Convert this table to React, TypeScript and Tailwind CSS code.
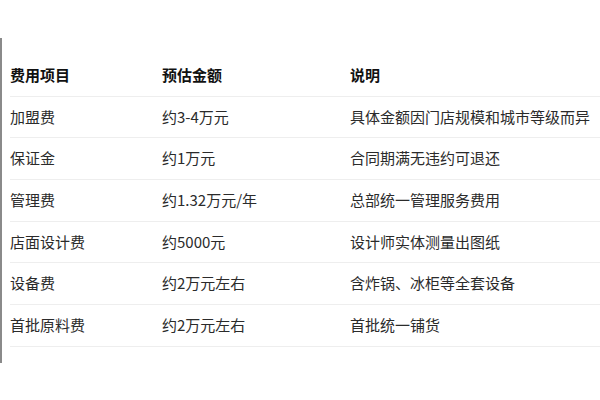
const rows = [
  { item: "加盟费", amount: "约3-4万元", note: "具体金额因门店规模和城市等级而异" },
  { item: "保证金", amount: "约1万元", note: "合同期满无违约可退还" },
  { item: "管理费", amount: "约1.32万元/年", note: "总部统一管理服务费用" },
  { item: "店面设计费", amount: "约5000元", note: "设计师实体测量出图纸" },
  { item: "设备费", amount: "约2万元左右", note: "含炸锅、冰柜等全套设备" },
  { item: "首批原料费", amount: "约2万元左右", note: "首批统一铺货" },
];

export default function App() {
  return (
    <div className="w-[600px] h-[400px] bg-white overflow-hidden font-['Noto_Sans_CJK_SC','Noto_Sans',sans-serif]">
      <div className="mt-[38px] border-l-2 border-[#8a8a8a] pl-2 pt-[17px] pb-4">
        <div className="grid grid-cols-[152px_188px_1fr] text-[15px] leading-[16.67px] font-bold text-[#111111] border-b border-[#eeeeee]">
          <div className="py-3">费用项目</div>
          <div className="py-3">预估金额</div>
          <div className="py-3">说明</div>
        </div>
        {rows.map((r) => (
          <div
            key={r.item}
            className="grid grid-cols-[152px_188px_1fr] text-[15px] leading-[16.67px] text-[#2b2b2b] border-b border-[#eeeeee]"
          >
            <div className="py-3">{r.item}</div>
            <div className="py-3">{r.amount}</div>
            <div className="py-3 whitespace-nowrap">{r.note}</div>
          </div>
        ))}
      </div>
    </div>
  );
}
